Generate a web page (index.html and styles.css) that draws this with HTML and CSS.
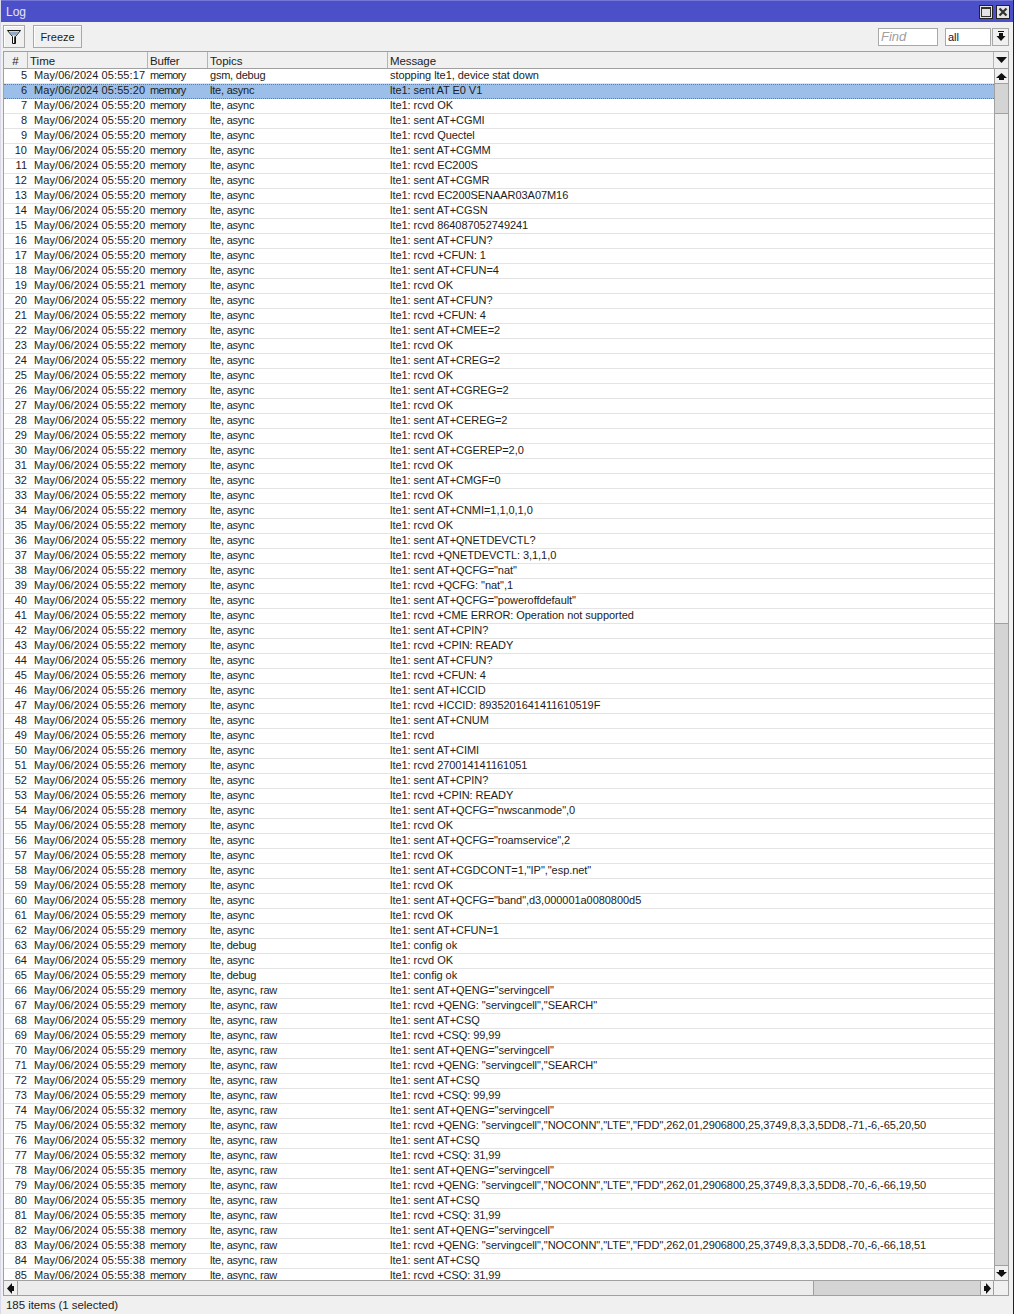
FILE: index.html
```html
<!DOCTYPE html>
<html lang="en">
<head>
<meta charset="utf-8">
<title>Log</title>
<link rel="stylesheet" href="styles.css">
</head>
<body>
<div class="window">
  <div class="titlebar">
    <span class="title">Log</span>
    <div class="winbtns">
      <button class="winbtn"><svg width="12" height="12" viewBox="0 0 12 12"><rect x="1.5" y="1.5" width="9" height="9" fill="none" stroke="#333" stroke-width="1"/><rect x="1" y="1" width="10" height="2" fill="#333"/></svg></button>
      <button class="winbtn"><svg width="12" height="12" viewBox="0 0 12 12"><path d="M2.5 2.5 L9.5 9.5 M9.5 2.5 L2.5 9.5" stroke="#333" stroke-width="2.2" fill="none"/></svg></button>
    </div>
  </div>
  <div class="toolbar">
    <button class="btn filter"><svg width="14" height="14" viewBox="0 0 14 14"><path d="M.5 .5 H13.5 L8.5 6.5 V13.5 H5.5 V6.5 Z" fill="#fff" stroke="#111" stroke-width="1"/><path d="M2 1.5 H12 L8.5 5.5 H5.5 Z" fill="#8fa9c4"/><path d="M7.8 6.5 V13" stroke="#111" stroke-width="1.2"/></svg></button>
    <button class="btn freeze">Freeze</button>
    <span class="spacer"></span>
    <span class="field find">Find</span>
    <span class="field all">all</span>
    <button class="combo"><svg width="10" height="11" viewBox="0 0 10 11"><path d="M2 0 H8 V1 H2 Z M3 2 H7 V5 H9.5 L5 10 L.5 5 H3 Z" fill="#111"/></svg></button>
  </div>
  <div class="table">
    <div class="thead">
      <div class="th num">#</div><div class="th tm">Time</div><div class="th bf">Buffer</div><div class="th tp">Topics</div><div class="th msg">Message</div>
      <div class="th menu"><svg width="11" height="6" viewBox="0 0 11 6"><path d="M0 0 H11 L5.5 6 Z" fill="#111"/></svg></div>
    </div>
    <div class="tmain">
      <div class="rows">
        <div class="r"><span>5</span><span>May/06/2024 05:55:17</span><span>memory</span><span>gsm, debug</span><span>stopping lte1, device stat down</span></div>
        <div class="r sel"><span>6</span><span>May/06/2024 05:55:20</span><span>memory</span><span>lte, async</span><span>lte1: sent AT E0 V1</span></div>
        <div class="r"><span>7</span><span>May/06/2024 05:55:20</span><span>memory</span><span>lte, async</span><span>lte1: rcvd OK</span></div>
        <div class="r"><span>8</span><span>May/06/2024 05:55:20</span><span>memory</span><span>lte, async</span><span>lte1: sent AT+CGMI</span></div>
        <div class="r"><span>9</span><span>May/06/2024 05:55:20</span><span>memory</span><span>lte, async</span><span>lte1: rcvd Quectel</span></div>
        <div class="r"><span>10</span><span>May/06/2024 05:55:20</span><span>memory</span><span>lte, async</span><span>lte1: sent AT+CGMM</span></div>
        <div class="r"><span>11</span><span>May/06/2024 05:55:20</span><span>memory</span><span>lte, async</span><span>lte1: rcvd EC200S</span></div>
        <div class="r"><span>12</span><span>May/06/2024 05:55:20</span><span>memory</span><span>lte, async</span><span>lte1: sent AT+CGMR</span></div>
        <div class="r"><span>13</span><span>May/06/2024 05:55:20</span><span>memory</span><span>lte, async</span><span>lte1: rcvd EC200SENAAR03A07M16</span></div>
        <div class="r"><span>14</span><span>May/06/2024 05:55:20</span><span>memory</span><span>lte, async</span><span>lte1: sent AT+CGSN</span></div>
        <div class="r"><span>15</span><span>May/06/2024 05:55:20</span><span>memory</span><span>lte, async</span><span>lte1: rcvd 864087052749241</span></div>
        <div class="r"><span>16</span><span>May/06/2024 05:55:20</span><span>memory</span><span>lte, async</span><span>lte1: sent AT+CFUN?</span></div>
        <div class="r"><span>17</span><span>May/06/2024 05:55:20</span><span>memory</span><span>lte, async</span><span>lte1: rcvd +CFUN: 1</span></div>
        <div class="r"><span>18</span><span>May/06/2024 05:55:20</span><span>memory</span><span>lte, async</span><span>lte1: sent AT+CFUN=4</span></div>
        <div class="r"><span>19</span><span>May/06/2024 05:55:21</span><span>memory</span><span>lte, async</span><span>lte1: rcvd OK</span></div>
        <div class="r"><span>20</span><span>May/06/2024 05:55:22</span><span>memory</span><span>lte, async</span><span>lte1: sent AT+CFUN?</span></div>
        <div class="r"><span>21</span><span>May/06/2024 05:55:22</span><span>memory</span><span>lte, async</span><span>lte1: rcvd +CFUN: 4</span></div>
        <div class="r"><span>22</span><span>May/06/2024 05:55:22</span><span>memory</span><span>lte, async</span><span>lte1: sent AT+CMEE=2</span></div>
        <div class="r"><span>23</span><span>May/06/2024 05:55:22</span><span>memory</span><span>lte, async</span><span>lte1: rcvd OK</span></div>
        <div class="r"><span>24</span><span>May/06/2024 05:55:22</span><span>memory</span><span>lte, async</span><span>lte1: sent AT+CREG=2</span></div>
        <div class="r"><span>25</span><span>May/06/2024 05:55:22</span><span>memory</span><span>lte, async</span><span>lte1: rcvd OK</span></div>
        <div class="r"><span>26</span><span>May/06/2024 05:55:22</span><span>memory</span><span>lte, async</span><span>lte1: sent AT+CGREG=2</span></div>
        <div class="r"><span>27</span><span>May/06/2024 05:55:22</span><span>memory</span><span>lte, async</span><span>lte1: rcvd OK</span></div>
        <div class="r"><span>28</span><span>May/06/2024 05:55:22</span><span>memory</span><span>lte, async</span><span>lte1: sent AT+CEREG=2</span></div>
        <div class="r"><span>29</span><span>May/06/2024 05:55:22</span><span>memory</span><span>lte, async</span><span>lte1: rcvd OK</span></div>
        <div class="r"><span>30</span><span>May/06/2024 05:55:22</span><span>memory</span><span>lte, async</span><span>lte1: sent AT+CGEREP=2,0</span></div>
        <div class="r"><span>31</span><span>May/06/2024 05:55:22</span><span>memory</span><span>lte, async</span><span>lte1: rcvd OK</span></div>
        <div class="r"><span>32</span><span>May/06/2024 05:55:22</span><span>memory</span><span>lte, async</span><span>lte1: sent AT+CMGF=0</span></div>
        <div class="r"><span>33</span><span>May/06/2024 05:55:22</span><span>memory</span><span>lte, async</span><span>lte1: rcvd OK</span></div>
        <div class="r"><span>34</span><span>May/06/2024 05:55:22</span><span>memory</span><span>lte, async</span><span>lte1: sent AT+CNMI=1,1,0,1,0</span></div>
        <div class="r"><span>35</span><span>May/06/2024 05:55:22</span><span>memory</span><span>lte, async</span><span>lte1: rcvd OK</span></div>
        <div class="r"><span>36</span><span>May/06/2024 05:55:22</span><span>memory</span><span>lte, async</span><span>lte1: sent AT+QNETDEVCTL?</span></div>
        <div class="r"><span>37</span><span>May/06/2024 05:55:22</span><span>memory</span><span>lte, async</span><span>lte1: rcvd +QNETDEVCTL: 3,1,1,0</span></div>
        <div class="r"><span>38</span><span>May/06/2024 05:55:22</span><span>memory</span><span>lte, async</span><span>lte1: sent AT+QCFG="nat"</span></div>
        <div class="r"><span>39</span><span>May/06/2024 05:55:22</span><span>memory</span><span>lte, async</span><span>lte1: rcvd +QCFG: "nat",1</span></div>
        <div class="r"><span>40</span><span>May/06/2024 05:55:22</span><span>memory</span><span>lte, async</span><span>lte1: sent AT+QCFG="poweroffdefault"</span></div>
        <div class="r"><span>41</span><span>May/06/2024 05:55:22</span><span>memory</span><span>lte, async</span><span>lte1: rcvd +CME ERROR: Operation not supported</span></div>
        <div class="r"><span>42</span><span>May/06/2024 05:55:22</span><span>memory</span><span>lte, async</span><span>lte1: sent AT+CPIN?</span></div>
        <div class="r"><span>43</span><span>May/06/2024 05:55:22</span><span>memory</span><span>lte, async</span><span>lte1: rcvd +CPIN: READY</span></div>
        <div class="r"><span>44</span><span>May/06/2024 05:55:26</span><span>memory</span><span>lte, async</span><span>lte1: sent AT+CFUN?</span></div>
        <div class="r"><span>45</span><span>May/06/2024 05:55:26</span><span>memory</span><span>lte, async</span><span>lte1: rcvd +CFUN: 4</span></div>
        <div class="r"><span>46</span><span>May/06/2024 05:55:26</span><span>memory</span><span>lte, async</span><span>lte1: sent AT+ICCID</span></div>
        <div class="r"><span>47</span><span>May/06/2024 05:55:26</span><span>memory</span><span>lte, async</span><span>lte1: rcvd +ICCID: 8935201641411610519F</span></div>
        <div class="r"><span>48</span><span>May/06/2024 05:55:26</span><span>memory</span><span>lte, async</span><span>lte1: sent AT+CNUM</span></div>
        <div class="r"><span>49</span><span>May/06/2024 05:55:26</span><span>memory</span><span>lte, async</span><span>lte1: rcvd</span></div>
        <div class="r"><span>50</span><span>May/06/2024 05:55:26</span><span>memory</span><span>lte, async</span><span>lte1: sent AT+CIMI</span></div>
        <div class="r"><span>51</span><span>May/06/2024 05:55:26</span><span>memory</span><span>lte, async</span><span>lte1: rcvd 270014141161051</span></div>
        <div class="r"><span>52</span><span>May/06/2024 05:55:26</span><span>memory</span><span>lte, async</span><span>lte1: sent AT+CPIN?</span></div>
        <div class="r"><span>53</span><span>May/06/2024 05:55:26</span><span>memory</span><span>lte, async</span><span>lte1: rcvd +CPIN: READY</span></div>
        <div class="r"><span>54</span><span>May/06/2024 05:55:28</span><span>memory</span><span>lte, async</span><span>lte1: sent AT+QCFG="nwscanmode",0</span></div>
        <div class="r"><span>55</span><span>May/06/2024 05:55:28</span><span>memory</span><span>lte, async</span><span>lte1: rcvd OK</span></div>
        <div class="r"><span>56</span><span>May/06/2024 05:55:28</span><span>memory</span><span>lte, async</span><span>lte1: sent AT+QCFG="roamservice",2</span></div>
        <div class="r"><span>57</span><span>May/06/2024 05:55:28</span><span>memory</span><span>lte, async</span><span>lte1: rcvd OK</span></div>
        <div class="r"><span>58</span><span>May/06/2024 05:55:28</span><span>memory</span><span>lte, async</span><span>lte1: sent AT+CGDCONT=1,"IP","esp.net"</span></div>
        <div class="r"><span>59</span><span>May/06/2024 05:55:28</span><span>memory</span><span>lte, async</span><span>lte1: rcvd OK</span></div>
        <div class="r"><span>60</span><span>May/06/2024 05:55:28</span><span>memory</span><span>lte, async</span><span>lte1: sent AT+QCFG="band",d3,000001a0080800d5</span></div>
        <div class="r"><span>61</span><span>May/06/2024 05:55:29</span><span>memory</span><span>lte, async</span><span>lte1: rcvd OK</span></div>
        <div class="r"><span>62</span><span>May/06/2024 05:55:29</span><span>memory</span><span>lte, async</span><span>lte1: sent AT+CFUN=1</span></div>
        <div class="r"><span>63</span><span>May/06/2024 05:55:29</span><span>memory</span><span>lte, debug</span><span>lte1: config ok</span></div>
        <div class="r"><span>64</span><span>May/06/2024 05:55:29</span><span>memory</span><span>lte, async</span><span>lte1: rcvd OK</span></div>
        <div class="r"><span>65</span><span>May/06/2024 05:55:29</span><span>memory</span><span>lte, debug</span><span>lte1: config ok</span></div>
        <div class="r"><span>66</span><span>May/06/2024 05:55:29</span><span>memory</span><span>lte, async, raw</span><span>lte1: sent AT+QENG="servingcell"</span></div>
        <div class="r"><span>67</span><span>May/06/2024 05:55:29</span><span>memory</span><span>lte, async, raw</span><span>lte1: rcvd +QENG: "servingcell","SEARCH"</span></div>
        <div class="r"><span>68</span><span>May/06/2024 05:55:29</span><span>memory</span><span>lte, async, raw</span><span>lte1: sent AT+CSQ</span></div>
        <div class="r"><span>69</span><span>May/06/2024 05:55:29</span><span>memory</span><span>lte, async, raw</span><span>lte1: rcvd +CSQ: 99,99</span></div>
        <div class="r"><span>70</span><span>May/06/2024 05:55:29</span><span>memory</span><span>lte, async, raw</span><span>lte1: sent AT+QENG="servingcell"</span></div>
        <div class="r"><span>71</span><span>May/06/2024 05:55:29</span><span>memory</span><span>lte, async, raw</span><span>lte1: rcvd +QENG: "servingcell","SEARCH"</span></div>
        <div class="r"><span>72</span><span>May/06/2024 05:55:29</span><span>memory</span><span>lte, async, raw</span><span>lte1: sent AT+CSQ</span></div>
        <div class="r"><span>73</span><span>May/06/2024 05:55:29</span><span>memory</span><span>lte, async, raw</span><span>lte1: rcvd +CSQ: 99,99</span></div>
        <div class="r"><span>74</span><span>May/06/2024 05:55:32</span><span>memory</span><span>lte, async, raw</span><span>lte1: sent AT+QENG="servingcell"</span></div>
        <div class="r"><span>75</span><span>May/06/2024 05:55:32</span><span>memory</span><span>lte, async, raw</span><span>lte1: rcvd +QENG: "servingcell","NOCONN","LTE","FDD",262,01,2906800,25,3749,8,3,3,5DD8,-71,-6,-65,20,50</span></div>
        <div class="r"><span>76</span><span>May/06/2024 05:55:32</span><span>memory</span><span>lte, async, raw</span><span>lte1: sent AT+CSQ</span></div>
        <div class="r"><span>77</span><span>May/06/2024 05:55:32</span><span>memory</span><span>lte, async, raw</span><span>lte1: rcvd +CSQ: 31,99</span></div>
        <div class="r"><span>78</span><span>May/06/2024 05:55:35</span><span>memory</span><span>lte, async, raw</span><span>lte1: sent AT+QENG="servingcell"</span></div>
        <div class="r"><span>79</span><span>May/06/2024 05:55:35</span><span>memory</span><span>lte, async, raw</span><span>lte1: rcvd +QENG: "servingcell","NOCONN","LTE","FDD",262,01,2906800,25,3749,8,3,3,5DD8,-70,-6,-66,19,50</span></div>
        <div class="r"><span>80</span><span>May/06/2024 05:55:35</span><span>memory</span><span>lte, async, raw</span><span>lte1: sent AT+CSQ</span></div>
        <div class="r"><span>81</span><span>May/06/2024 05:55:35</span><span>memory</span><span>lte, async, raw</span><span>lte1: rcvd +CSQ: 31,99</span></div>
        <div class="r"><span>82</span><span>May/06/2024 05:55:38</span><span>memory</span><span>lte, async, raw</span><span>lte1: sent AT+QENG="servingcell"</span></div>
        <div class="r"><span>83</span><span>May/06/2024 05:55:38</span><span>memory</span><span>lte, async, raw</span><span>lte1: rcvd +QENG: "servingcell","NOCONN","LTE","FDD",262,01,2906800,25,3749,8,3,3,5DD8,-70,-6,-66,18,51</span></div>
        <div class="r"><span>84</span><span>May/06/2024 05:55:38</span><span>memory</span><span>lte, async, raw</span><span>lte1: sent AT+CSQ</span></div>
        <div class="r"><span>85</span><span>May/06/2024 05:55:38</span><span>memory</span><span>lte, async, raw</span><span>lte1: rcvd +CSQ: 31,99</span></div>
      </div>
      <div class="vscroll">
        <div class="sbtn v"><svg width="11" height="7" viewBox="0 0 11 7"><path d="M5.5 0 L11 5 H8 V7 H3 V5 H0 Z" fill="#111"/></svg></div>
        <div class="vtrack-a"></div>
        <div class="vthumb"></div>
        <div class="vtrack-b"></div>
        <div class="sbtn v last"><svg width="11" height="7" viewBox="0 0 11 7"><path d="M3 0 H8 V2 H11 L5.5 7 L0 2 H3 Z" fill="#111"/></svg></div>
      </div>
    </div>
    <div class="hscroll">
      <div class="sbtn h"><svg width="7" height="11" viewBox="0 0 7 11"><path d="M0 5.5 L5 0 V3 H7 V8 H5 V11 Z" fill="#111"/></svg></div>
      <div class="hthumb"></div>
      <div class="htrack"></div>
      <div class="sbtn h end"><svg width="7" height="11" viewBox="0 0 7 11"><path d="M7 5.5 L2 0 V3 H0 V8 H2 V11 Z" fill="#111"/></svg></div>
      <div class="corner"></div>
    </div>
  </div>
  <div class="status">185 items (1 selected)</div>
</div>
</body>
</html>
```
FILE: styles.css
```css
* { box-sizing: border-box; }
html, body { margin: 0; padding: 0; background: #fff; }
body {
  font-family: "Liberation Sans", Arial, sans-serif;
  font-size: 11px;
  color: #1c1c1c;
}
.window {
  width: 1014px;
  height: 1314px;
  background: #f0f0f0;
  border-right: 1px solid #222;
  border-left: 1px solid #d8d8e8;
  display: flex;
  flex-direction: column;
  overflow: hidden;
}
.titlebar {
  height: 22px;
  flex: none;
  background: #4c50c8;
  border-top: 1px solid #7477d8;
  display: flex;
  align-items: center;
  justify-content: space-between;
  padding: 1px 3px 0 5px;
}
.title { color: #e4e4f4; font-size: 12px; }
.winbtns { display: flex; gap: 3px; }
.winbtn {
  width: 14px;
  height: 14px;
  padding: 0;
  background: #e4e4e4;
  border: 1px solid #222;
  display: flex;
  align-items: center;
  justify-content: center;
}
.toolbar {
  height: 29px;
  flex: none;
  display: flex;
  align-items: center;
  padding: 0 4px 0 2px;
}
.btn {
  height: 23px;
  padding: 0;
  background: #f0f0f0;
  border: 1px solid #a8a8a8;
  box-shadow: inset 1px 1px 0 #fff;
  font: inherit;
  color: inherit;
  display: flex;
  align-items: center;
  justify-content: center;
}
.filter { width: 22px; }
.freeze { width: 49px; margin-left: 8px; }
.spacer { flex: 1; }
.field {
  height: 18px;
  background: #fff;
  border: 1px solid #a8a8a8;
  line-height: 16px;
  padding-left: 2px;
}
.find { width: 60px; font-style: italic; color: #a0a0a0; font-size: 13px; }
.all { width: 46px; margin-left: 7px; color: #14143c; }
.combo {
  width: 17px;
  height: 18px;
  margin-left: 1px;
  padding: 0;
  background: #f0f0f0;
  border: 1px solid #a8a8a8;
  display: flex;
  align-items: center;
  justify-content: center;
}
.table {
  width: 1006px;
  margin-left: 2px;
  flex: none;
  background: #fff;
  display: flex;
  flex-direction: column;
  border-left: 1px solid #a0a0a0;
  border-right: 1px solid #a0a0a0;
  border-bottom: 1px solid #a0a0a0;
}
.thead {
  height: 18px;
  display: flex;
  background: #f0f0f0;
  border-top: 1px solid #a0a0a0;
  border-bottom: 1px solid #a0a0a0;
}
.th {
  border-right: 1px solid #b4b4b4;
  line-height: 18px;
  padding-left: 2px;
  font-size: 11.5px;
}
.th.num { width: 24px; padding: 0; text-align: center; }
.th.tm { width: 120px; }
.th.bf { width: 60px; letter-spacing: -0.2px; }
.th.tp { width: 180px; }
.th.msg { flex: 1; letter-spacing: -0.1px; }
.th.menu {
  width: 14px;
  border-right: 0;
  padding: 0;
  display: flex;
  align-items: center;
  justify-content: center;
}
.tmain { height: 1211px; display: flex; }
.rows { width: 990px; height: 1211px; overflow: hidden; flex: none; }
.r {
  height: 15px;
  display: grid;
  grid-template-columns: 24px 120px 60px 180px 1fr;
  border-bottom: 1px solid #e4e4e4;
  line-height: 13px;
  white-space: nowrap;
}
.r span { padding-left: 2px; }
.r span:nth-child(1) { padding: 0 1px 0 0; text-align: right; }
.r span:nth-child(2) { padding-left: 6px; letter-spacing: 0.08px; }
.r span:nth-child(3) { letter-spacing: -0.7px; }
.r span:nth-child(4) { letter-spacing: -0.22px; }
.r span:nth-child(5) { letter-spacing: -0.05px; }
.r.sel {
  background: #9bbfe8;
  border-top: 1px dotted #777;
  border-bottom: 1px dotted #777;
  line-height: 11px;
}
.vscroll {
  width: 14px;
  flex: 1;
  display: flex;
  flex-direction: column;
  background: #d4d4d4;
  border-left: 1px solid #a0a0a0;
}
.sbtn {
  background: #f0f0f0;
  display: flex;
  align-items: center;
  justify-content: center;
  flex: none;
}
.sbtn.v { height: 15px; border-bottom: 1px solid #a0a0a0; }
.sbtn.v.last { border-top: 1px solid #a0a0a0; border-bottom: 0; }
.vtrack-a { height: 29px; flex: none; }
.vthumb {
  height: 511px;
  flex: none;
  background: #ececec;
  border-top: 1px solid #a0a0a0;
  border-bottom: 1px solid #a0a0a0;
}
.vtrack-b { flex: 1; }
.hscroll {
  height: 15px;
  display: flex;
  border-top: 1px solid #a0a0a0;
  background: #d4d4d4;
}
.sbtn.h { width: 14px; border-right: 1px solid #a0a0a0; }
.sbtn.h.end { border-left: 1px solid #a0a0a0; border-right: 1px solid #a0a0a0; }
.hthumb {
  width: 796px;
  flex: none;
  background: #ececec;
  border-right: 1px solid #a0a0a0;
}
.htrack { flex: 1; }
.corner { width: 14px; flex: none; background: #f0f0f0; }
.status {
  flex: 1;
  padding: 3px 0 0 5px;
  font-size: 11.5px;
  letter-spacing: -0.05px;
}
```
